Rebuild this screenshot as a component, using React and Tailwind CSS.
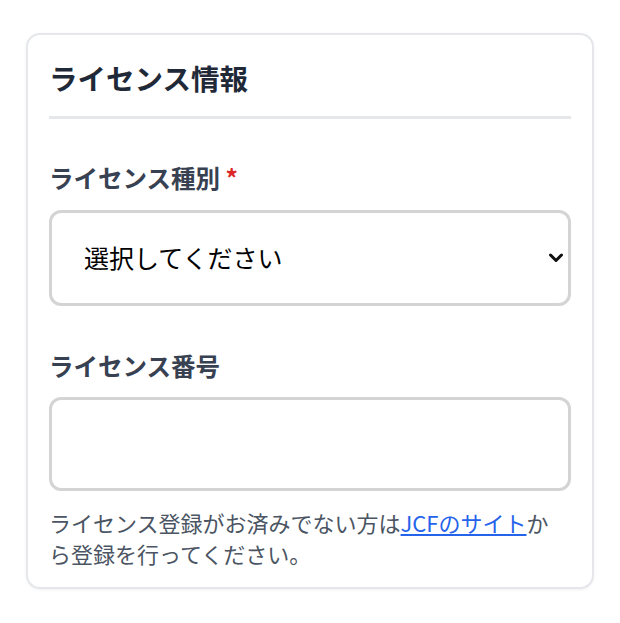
import React from "react"

const jp = { fontFamily: '"Noto Sans CJK JP", "Noto Sans", sans-serif' }

export default function App() {
  return (
    <div className="min-h-[623px] bg-white px-[26px] pt-[33px]" style={jp}>
      <div className="rounded-[14px] border-2 border-[#e5e7eb] bg-white px-[21px] pt-[22px] pb-[18px] shadow-[0_1px_3px_rgba(0,0,0,0.06)]">
        {/* Section title */}
        <h2 className="border-b-[3px] border-[#e5e7eb] pb-[17px] text-[28.5px] leading-[42px] font-bold text-[#1f2937]">
          ライセンス情報
        </h2>

        {/* License type */}
        <div className="mt-[41px]">
          <label className="block text-[24.5px] leading-[36px] font-bold text-[#374151]">
            ライセンス種別 <span className="text-[#dc2626]">*</span>
          </label>
          <div className="relative mt-[14px]">
            <select
              className="h-[96px] w-full appearance-none rounded-[12px] border-[3px] border-[#d4d4d4] bg-white pl-[32px] pr-12 text-[25px] text-black outline-none"
              style={jp}
              defaultValue=""
            >
              <option value="">選択してください</option>
            </select>
            <svg
              className="pointer-events-none absolute top-1/2 right-[7px] -translate-y-1/2"
              width="16"
              height="11"
              viewBox="0 0 16 11"
              fill="none"
            >
              <path d="M2.5 2.5l5.5 5.5 5.5-5.5" stroke="#111" strokeWidth="3" strokeLinecap="round" strokeLinejoin="round" />
            </svg>
          </div>
        </div>

        {/* License number */}
        <div className="mt-[42px]">
          <label className="block text-[24.5px] leading-[36px] font-bold text-[#374151]">
            ライセンス番号
          </label>
          <input
            type="text"
            className="mt-[13px] h-[94px] w-full rounded-[12px] border-[3px] border-[#d4d4d4] bg-white px-4 text-[25px] outline-none"
          />
          <p className="mt-[16px] pr-[6px] text-[22px] leading-[31px] text-[#4b5563]">
            ライセンス登録がお済みでない方は
            <a href="#" className="text-[#2563eb] underline">
              JCFのサイト
            </a>
            から登録を行ってください。
          </p>
        </div>
      </div>
    </div>
  )
}
